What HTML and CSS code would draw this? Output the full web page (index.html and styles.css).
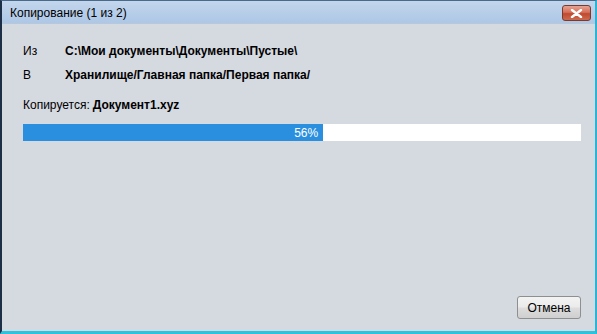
FILE: index.html
```html
<!DOCTYPE html>
<html lang="ru">
<head>
<meta charset="utf-8">
<title>Копирование</title>
<link rel="stylesheet" href="styles.css">
</head>
<body>
<div class="window">
  <div class="titlebar">
    <span class="title">Копирование (1 из 2)</span>
    <button class="close" aria-label="Закрыть">
      <svg width="13" height="9" viewBox="0 0 13 9"><path d="M2 1 L11 8 M11 1 L2 8" stroke="#fff" stroke-width="2.4" stroke-linecap="round"/></svg>
    </button>
  </div>
  <div class="body">
    <div class="paths">
      <div class="row"><span class="label">Из</span><b>C:\Мои документы\Документы\Пустые\</b></div>
      <div class="row"><span class="label">В</span><b>Хранилище/Главная папка/Первая папка/</b></div>
    </div>
    <div class="current">Копируется: <b>Документ1.xyz</b></div>
    <div class="progress">
      <div class="fill" style="width:53.8%"><span>56%</span></div>
    </div>
    <div class="spacer"></div>
    <div class="actions"><button class="btn">Отмена</button></div>
  </div>
</div>
</body>
</html>
```
FILE: styles.css
```css
* { box-sizing: border-box; }
html, body { margin: 0; padding: 0; }
body {
  width: 597px; height: 334px; overflow: hidden;
  font-family: "Liberation Sans", Arial, sans-serif;
  font-size: 12px; color: #000;
  background: #d5d9e0;
}
.window {
  width: 597px; height: 334px;
  display: flex; flex-direction: column;
  border-left: 2px solid #1d2f47;
  border-right: 2px solid #27b6d6;
  border-bottom: 3px solid #2bc4de;
  border-top: 1px solid #4a6a8c;
  background: #d5d9e0;
}
.titlebar {
  height: 23px;
  flex: none;
  display: flex; align-items: center; justify-content: space-between;
  background: linear-gradient(#c3d6ec, #adc7e6);
  padding: 0 4px 0 8px;
  border-bottom: 1px solid #b8c8da;
}
.title { font-size: 12px; color: #000; padding-top: 2px; }
.close {
  width: 29px; height: 16px; padding: 0; margin-top: 2px;
  border: 1px solid #7a3a2e; border-radius: 3px;
  background: linear-gradient(#e6a491 0%, #d6705a 45%, #c04a30 55%, #cc6a4e 100%);
  display: flex; align-items: center; justify-content: center;
}
.body {
  flex: 1;
  display: flex; flex-direction: column;
  padding: 20px 14px 12px 21px;
}
.paths { display: flex; flex-direction: column; gap: 10px; }
.row { display: flex; height: 14px; align-items: center; }
.label { width: 42px; flex: none; }
.current { margin-top: 16px; height: 14px; display: flex; align-items: center; gap: 3px; }
.progress {
  margin-top: 12px;
  height: 17px;
  background: #fff;
  display: flex;
}
.fill {
  background: #2b8fe0;
  height: 100%;
  display: flex; align-items: center; justify-content: flex-end;
  color: #fff; padding-right: 5px;
}
.spacer { flex: 1; }
.actions { display: flex; justify-content: flex-end; }
.btn {
  width: 64px; height: 23px;
  font-family: "Liberation Sans", Arial, sans-serif; font-size: 12px; color: #000;
  border: 1px solid #8e8f8f; border-radius: 3px;
  background: linear-gradient(#f3f3f3 0%, #ebebeb 48%, #dddddd 52%, #cfcfcf 100%);
  padding: 0;
}
```
